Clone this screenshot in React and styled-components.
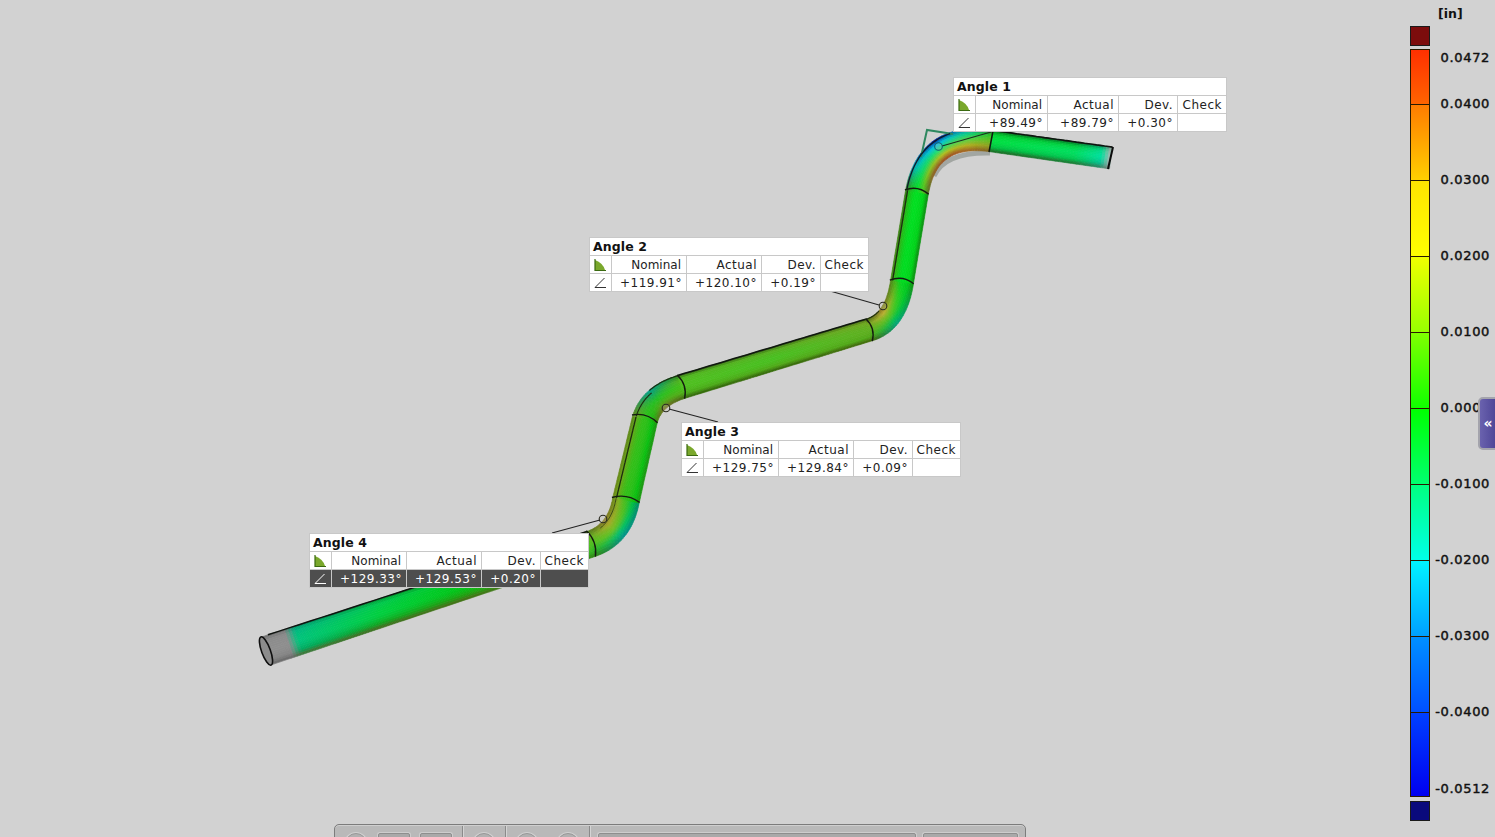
import React from 'react';
import styled, { createGlobalStyle } from 'styled-components';

const GlobalStyle = createGlobalStyle`
    html, body {
        margin: 0;
        padding: 0;
        height: 100%;
        overflow: hidden;
        background: #d2d2d2;
    }
`;

const Root = styled.div`
    display: flex;
    width: 1495px;
    height: 837px;
    position: relative;
    overflow: hidden;
    background: #d2d2d2;
    font-family: "DejaVu Sans", sans-serif;
`;

const Scene = styled.div`
    position: relative;
    width: 1400px;
    height: 837px;
`;

const SceneDrawing = styled.svg`
    display: block;
    width: 1400px;
    height: 837px;
`;

const Label = styled.div`
    position: absolute;
    left: ${p => p.$x}px;
    top: ${p => p.$y}px;
    display: grid;
    grid-template-columns: ${p => p.$cols};
    grid-auto-rows: 17px;
    gap: 1px;
    padding: 1px;
    background: #c8c8c8;
    color: #222;
    font-size: 12px;
    line-height: 17px;
`;

const LabelTitle = styled.div`
    grid-column: 1 / -1;
    background: #fff;
    color: #111;
    font-weight: bold;
    font-size: 12.5px;
    letter-spacing: 0.1px;
    padding-left: 3px;
`;

const Cell = styled.div`
    background: ${p => (p.$selected ? '#4e4e4e' : '#fff')};
    color: ${p => (p.$selected ? '#fff' : '#222')};
    text-align: right;
    padding-right: ${p => (p.$tight ? 5 : 4)}px;
    letter-spacing: ${p => (p.$tight ? 0 : 0.5)}px;
    line-height: 19px;
    white-space: nowrap;
    display: ${p => (p.$icon ? 'flex' : 'block')};
    align-items: center;
    justify-content: center;
    ${p => p.$icon && 'padding-right: 1px;'}
`;

const Toolbar = styled.div`
    position: absolute;
    left: 334px;
    top: 824px;
    width: 692px;
    height: 40px;
    box-sizing: border-box;
    display: flex;
    align-items: flex-start;
    padding-top: 8px;
    padding-left: 10px;
    border: 1px solid #7c7c7c;
    border-radius: 5px 5px 0 0;
    background: #b9b9b9;
    box-shadow: inset 0 1px 0 #cfcfcf;
`;

const ToolRound = styled.div`
    box-sizing: border-box;
    width: 22px;
    height: 22px;
    flex: none;
    border-radius: 50%;
    margin-right: ${p => p.$gap || 0}px;
    border: 1px solid #979797;
    box-shadow: 0 0 0 1px #d0d0d0;
    background: #b1b1b1;
`;

const ToolSquare = styled.div`
    box-sizing: border-box;
    width: 32px;
    height: 24px;
    flex: none;
    margin-right: ${p => p.$gap || 0}px;
    border: 1px solid #8e8e8e;
    border-radius: 2px;
    box-shadow: 0 0 0 1px #cdcdcd;
    background: #a9a9a9;
`;

const ToolDivider = styled.div`
    width: 1px;
    height: 30px;
    flex: none;
    margin: -7px ${p => p.$after || 10}px 0 0;
    background: #8a8a8a;
    box-shadow: 1px 0 0 #d4d4d4;
`;

const ToolField = styled.div`
    box-sizing: border-box;
    width: ${p => p.$w}px;
    height: 24px;
    flex: none;
    margin-right: ${p => p.$gap || 0}px;
    border: 1px solid #8e8e8e;
    border-radius: 2px;
    box-shadow: 0 0 0 1px #cdcdcd;
    background: #a9a9a9;
`;

const Legend = styled.aside`
    width: 95px;
    height: 837px;
    flex: none;
    box-sizing: border-box;
    padding-top: 6px;
    padding-left: 10px;
    color: #111;
    display: flex;
    flex-direction: column;
`;

const Unit = styled.div`
    height: 20px;
    padding-left: 28px;
    font-size: 12.5px;
    font-weight: bold;
    line-height: 15px;
`;

const Swatch = styled.div`
    width: 18px;
    height: 18px;
    border: 1px solid #1a1a1a;
    background: ${p => p.$color};
    margin-top: ${p => p.$top || 0}px;
    flex: none;
`;

const Scale = styled.div`
    margin-top: 3px;
    position: relative;
    height: 748px;
    flex: none;
`;

const Band = styled.div`
    box-sizing: border-box;
    width: 20px;
    height: ${p => p.$h}px;
    background: linear-gradient(${p => p.$from}, ${p => p.$to});
    border-style: solid;
    border-width: ${p => (p.$first ? '1px' : '0')} 1px 1px 1px;
    border-color: #2a1a00;
`;

const Tick = styled.div`
    position: absolute;
    right: 5px;
    top: ${p => p.$y}px;
    font-size: 13px;
    letter-spacing: 0.65px;
    line-height: 16px;
    text-align: right;
    white-space: nowrap;
    -webkit-text-stroke: 0.45px #111;
`;

const Tab = styled.div`
    position: absolute;
    right: -5px;
    top: 397px;
    width: 16px;
    height: 49px;
    padding-right: 2px;
    border: 2px solid #a4a4ac;
    border-radius: 5px 0 0 5px;
    background: linear-gradient(90deg, #6a62ae, #4a4294);
    color: #fff;
    font-size: 14px;
    font-weight: bold;
    line-height: 49px;
    text-align: center;
`;

const bands = [
    [56, '#ff3000', '#ff6400'],
    [76, '#ff7c00', '#ffd000'],
    [76, '#ffe400', '#ffff00'],
    [76, '#f0ff00', '#98ff00'],
    [76, '#80ff00', '#10ff00'],
    [76, '#00ff00', '#00ff70'],
    [76, '#00ff80', '#00ffe8'],
    [76, '#00f4ff', '#00a0ff'],
    [76, '#0090ff', '#0050ff'],
    [84, '#0040ff', '#0000f0'],
];

const ticks = [
    [1, '0.0472'], [47, '0.0400'], [123, '0.0300'], [199, '0.0200'], [275, '0.0100'],
    [351, '0.0000'], [427, '-0.0100'], [503, '-0.0200'], [579, '-0.0300'], [655, '-0.0400'], [732, '-0.0512'],
];

// centre line of the tube, in page pixels: lines and quadratic bends
const P = {
    p0: [266, 651], a: [591, 544], ac: [620, 534], b: [626, 500], c: [645, 419], cc: [652, 396],
    d: [681, 387], e: [869, 330], ec: [896, 322], f: [902, 282], g: [917, 192], gc: [928, 132],
    h: [991, 141], i: [1111, 158],
};

const gray = ['#6e6e6e', '#8a8a8a', '#8e8e8e', '#848484', '#666666'];

// colours across the tube (upper-left edge to lower-right edge), by place along each piece
// bends keep their colours spread wide, straights only have a thin edge (spread)
const pieces = [
    { from: P.p0, to: P.a, r0: 14.8, r1: 13.2, n: 110, spread: 1.7, stations: [
        [0, gray], [0.07, gray],
        [0.1, ['#00906a', '#00b880', '#00c47c', '#00a860', '#4c6c30']],
        [0.35, ['#009030', '#00c850', '#00d040', '#10a820', '#4c6420']],
        [0.6, ['#108a20', '#00cc20', '#00c818', '#20a010', '#4c6818']],
        [1, ['#507818', '#60b020', '#50c020', '#30b020', '#308010']],
    ] },
    { from: P.a, ctrl: P.ac, to: P.b, r0: 13.2, r1: 13.5, n: 30, spread: 1.1, stations: [
        [0, ['#507818', '#60b020', '#50c020', '#30b020', '#308010']],
        [0.5, ['#807020', '#a8a828', '#70c020', '#00c070', '#008c8c']],
        [1, ['#6a8418', '#80b020', '#40c020', '#00c040', '#008868']],
    ] },
    { from: P.b, to: P.c, r0: 13.5, r1: 12.8, n: 30, spread: 1.7, stations: [
        [0, ['#6a8418', '#70a818', '#30c018', '#08c010', '#209010']],
        [1, ['#5c8018', '#60a818', '#30c018', '#08c010', '#209010']],
    ] },
    { from: P.c, ctrl: P.cc, to: P.d, r0: 12.8, r1: 12, n: 24, spread: 1.1, stations: [
        [0, ['#5c8018', '#60a818', '#30c018', '#10c010', '#408010']],
        [0.5, ['#00a090', '#10a860', '#20c020', '#50a818', '#806828']],
        [1, ['#207818', '#50b020', '#40c018', '#50b018', '#406810']],
    ] },
    { from: P.d, to: P.e, r0: 12, r1: 11.3, n: 60, spread: 1.7, stations: [
        [0, ['#305810', '#50b820', '#50c020', '#48a818', '#305c08']],
        [0.5, ['#305810', '#58b020', '#48c020', '#50a818', '#305c08']],
        [1, ['#405c10', '#70a820', '#60b020', '#50a818', '#406008']],
    ] },
    { from: P.e, ctrl: P.ec, to: P.f, r0: 11.3, r1: 11.6, n: 24, spread: 1.1, stations: [
        [0, ['#405c10', '#70a820', '#60b020', '#50a818', '#406008']],
        [0.45, ['#807020', '#c0b030', '#60c020', '#00c050', '#00a080']],
        [1, ['#508018', '#40b818', '#00d820', '#00c818', '#109010']],
    ] },
    { from: P.f, to: P.g, r0: 11.6, r1: 11.6, n: 30, spread: 1.7, stations: [
        [0, ['#508018', '#30b818', '#00dc20', '#00d018', '#108810']],
        [1, ['#406c18', '#20b818', '#00e020', '#00d018', '#108810']],
    ] },
    { from: P.g, ctrl: P.gc, to: P.h, r0: 11.6, r1: 10.8, n: 40, spread: 1, stations: [
        [0, ['#406c18', '#20b818', '#00e020', '#40c820', '#507020']],
        [0.2, ['#00a0c0', '#00c8a0', '#10d860', '#80c020', '#905828']],
        [0.5, ['#000090', '#00c0e8', '#20e070', '#b0c020', '#a04020']],
        [0.8, ['#00a0c0', '#10d080', '#60d040', '#b0b020', '#a06020']],
        [1, ['#106020', '#30c020', '#60c020', '#90a020', '#806020']],
    ] },
    { from: P.h, to: P.i, r0: 10.8, r1: 11, n: 40, spread: 1.3, stations: [
        [0, ['#005c10', '#00d030', '#00e040', '#00c040', '#206020']],
        [0.7, ['#006020', '#00d040', '#00e060', '#00c850', '#207030']],
        [0.92, ['#008050', '#00d888', '#00e0a0', '#00c090', '#308060']],
        [1, ['#8a8a8a', '#b0b0b0', '#b4b4b4', '#a8a8a8', '#808080']],
    ] },
];

const STRIPS = 14;

const hexToRgb = h => [1, 3, 5].map(i => parseInt(h.slice(i, i + 2), 16));

const mix = (a, b, t) => a.map((v, i) => v + (b[i] - v) * t);

const across = (colours, v, spread) => {
    const w = Math.sign(v) * Math.pow(Math.abs(v), spread);
    const x = ((w + 1) / 2) * (colours.length - 1);
    const i = Math.min(Math.floor(x), colours.length - 2);
    return mix(hexToRgb(colours[i]), hexToRgb(colours[i + 1]), x - i);
};

const colourAt = ({ stations, spread }, u, v) => {
    let k = 0;
    while (k < stations.length - 2 && u > stations[k + 1][0]) k++;
    const [u0, c0] = stations[k];
    const [u1, c1] = stations[k + 1];
    const t = Math.max(0, Math.min(1, (u - u0) / (u1 - u0)));
    const c = mix(across(c0, v, spread), across(c1, v, spread), t);
    return `rgb(${c.map(Math.round).join(',')})`;
};

const pointOn = (piece, u) => {
    const { from, ctrl, to } = piece;
    if (!ctrl) {
        return {
            pt: [from[0] + (to[0] - from[0]) * u, from[1] + (to[1] - from[1]) * u],
            dir: [to[0] - from[0], to[1] - from[1]],
        };
    }
    const w = 1 - u;
    return {
        pt: [0, 1].map(i => w * w * from[i] + 2 * w * u * ctrl[i] + u * u * to[i]),
        dir: [0, 1].map(i => 2 * w * (ctrl[i] - from[i]) + 2 * u * (to[i] - ctrl[i])),
    };
};

const offsetAt = (piece, u, v) => {
    const { pt, dir } = pointOn(piece, u);
    const len = Math.hypot(dir[0], dir[1]);
    const r = piece.r0 + (piece.r1 - piece.r0) * u;
    // left of travel is the upper-left side of the tube
    const nx = dir[1] / len;
    const ny = -dir[0] / len;
    return [pt[0] - nx * v * r, pt[1] - ny * v * r];
};

const fmt = p => `${p[0].toFixed(1)},${p[1].toFixed(1)}`;

const buildQuads = () => {
    const quads = [];
    pieces.forEach((piece, pi) => {
        for (let s = 0; s < piece.n; s++) {
            const u0 = s / piece.n;
            const u1 = (s + 1) / piece.n;
            for (let j = 0; j < STRIPS; j++) {
                const v0 = -1 + (2 * j) / STRIPS;
                const v1 = -1 + (2 * (j + 1)) / STRIPS;
                const pts = [
                    offsetAt(piece, u0, v0), offsetAt(piece, u1, v0),
                    offsetAt(piece, u1, v1), offsetAt(piece, u0, v1),
                ].map(fmt).join(' ');
                const fill = colourAt(piece, (u0 + u1) / 2, (v0 + v1) / 2);
                quads.push(<polygon key={`${pi}-${s}-${j}`} points={pts} fill={fill} stroke={fill} strokeWidth="0.6" />);
            }
        }
    });
    return quads;
};

const edgeLine = (pieceIndex, v, u0 = 0, u1 = 1) => {
    const out = [];
    for (let k = 0; k <= 30; k++) {
        out.push(fmt(offsetAt(pieces[pieceIndex], u0 + ((u1 - u0) * k) / 30, v)));
    }
    return out.join(' ');
};

const jointLine = (pieceIndex, u) => {
    const a = offsetAt(pieces[pieceIndex], u, -1.06);
    const b = offsetAt(pieces[pieceIndex], u, 1.02);
    const { dir } = pointOn(pieces[pieceIndex], u);
    const len = Math.hypot(dir[0], dir[1]);
    const mid = [(a[0] + b[0]) / 2 + (dir[0] / len) * 7, (a[1] + b[1]) / 2 + (dir[1] / len) * 7];
    return `M${fmt(a)} Q${fmt(mid)} ${fmt(b)}`;
};

const TubeDrawing = () => (
    <SceneDrawing viewBox="0 0 1400 837">
        <path d="M934 176 Q945 152 990 153" fill="none" stroke="#a2a6a2" strokeWidth="5" />
        {buildQuads()}
        <polyline points="921,157 927,130 953,134" fill="none" stroke="#2f8860" strokeWidth="2" />
        {/* top edges and the inner seam */}
        <polyline points={edgeLine(0, -1, 0.02, 1)} fill="none" stroke="#101410" strokeWidth="1.5" />
        <polyline points={edgeLine(2, -0.72)} fill="none" stroke="#1c2c10" strokeWidth="1.3" />
        <polyline points={edgeLine(3, -0.72, 0, 0.5)} fill="none" stroke="#1c2c10" strokeWidth="1.1" />
        <polyline points={edgeLine(3, -0.98, 0.5, 1)} fill="none" stroke="#1c2c10" strokeWidth="1.2" />
        <polyline points={edgeLine(4, -1)} fill="none" stroke="#101810" strokeWidth="1.6" />
        <polyline points={edgeLine(5, -0.98, 0, 0.4)} fill="none" stroke="#203010" strokeWidth="1.1" />
        <polyline points={edgeLine(6, -0.82)} fill="none" stroke="#1c2c10" strokeWidth="1.3" />
        <polyline points={edgeLine(7, -0.9, 0, 0.65)} fill="none" stroke="#101828" strokeWidth="1.3" />
        <polyline points={edgeLine(8, -1)} fill="none" stroke="#101410" strokeWidth="1.6" />
        <polyline points={edgeLine(1, -0.74, 0.3, 1)} fill="none" stroke="#3c4c18" strokeWidth="1" />
        {/* bend joints */}
        {[[1, 0], [1, 1], [3, 0], [3, 1], [5, 0], [5, 1], [7, 0]].map(([pi, u]) => (
            <path key={`${pi}-${u}`} d={jointLine(pi, u)} fill="none" stroke="#141c10" strokeWidth="1.4" />
        ))}
        <line x1="993" y1="131" x2="989" y2="152" stroke="#101810" strokeWidth="1.5" />
        {/* pipe ends */}
        <ellipse cx="266" cy="651" rx="4.4" ry="15" transform="rotate(-20 266 651)" fill="#8c8c8c" stroke="#101010" strokeWidth="1.6" />
        <line x1="1113" y1="147" x2="1108" y2="169" stroke="#0c0c0c" strokeWidth="2" />
        {/* leaders and measuring points */}
        <line x1="830" y1="291" x2="879" y2="305" stroke="#222" strokeWidth="1.1" />
        <line x1="669" y1="409" x2="718" y2="422" stroke="#222" strokeWidth="1.1" />
        <line x1="552" y1="533" x2="600" y2="520" stroke="#222" strokeWidth="1.1" />
        <line x1="942" y1="146" x2="991" y2="132" stroke="#1c2c20" strokeWidth="1.1" />
        <g fill="rgba(190,190,170,0.25)" stroke="#2a2a20" strokeWidth="1.1">
            <circle cx="883" cy="306" r="3.8" />
            <circle cx="666" cy="408" r="3.8" />
            <circle cx="603" cy="519" r="3.8" />
            <circle cx="938.5" cy="146.5" r="3.8" stroke="#106070" />
        </g>
    </SceneDrawing>
);

const MeasureIcon = () => (
    <svg width="14" height="14" viewBox="0 0 14 14">
        <path d="M2 12 V2 Q10 5 12 12 Z" fill="#7aa82c" />
        <path d="M2 1 V12.5 H13" fill="none" stroke="#3a6a10" strokeWidth="1.2" />
    </svg>
);

const AngleIcon = ({ light }) => (
    <svg width="14" height="14" viewBox="0 0 14 14">
        <path d="M11.5 2 L2 11.5 H13" fill="none" stroke={light ? '#fff' : '#333'} strokeWidth="1" />
    </svg>
);

const labels = [
    { name: 'Angle 1', x: 953, y: 77, cols: '21px 71px 70px 58px 48px', vals: ['+89.49°', '+89.79°', '+0.30°'] },
    { name: 'Angle 2', x: 589, y: 237, cols: '21px 74px 74px 58px 47px', vals: ['+119.91°', '+120.10°', '+0.19°'] },
    { name: 'Angle 3', x: 681, y: 422, cols: '21px 74px 74px 58px 47px', vals: ['+129.75°', '+129.84°', '+0.09°'] },
    { name: 'Angle 4', x: 309, y: 533, cols: '21px 74px 74px 58px 47px', vals: ['+129.33°', '+129.53°', '+0.20°'], selected: true },
];

const AngleLabel = ({ name, x, y, cols, vals, selected }) => (
    <Label $x={x} $y={y} $cols={cols}>
        <LabelTitle>{name}</LabelTitle>
        <Cell $icon><MeasureIcon /></Cell>
        <Cell $tight>Nominal</Cell>
        <Cell>Actual</Cell>
        <Cell>Dev.</Cell>
        <Cell>Check</Cell>
        <Cell $icon $selected={selected}><AngleIcon light={selected} /></Cell>
        {vals.map(v => <Cell key={v} $selected={selected}>{v}</Cell>)}
        <Cell $selected={selected} />
    </Label>
);

export default function App() {
    return (
        <Root>
            <GlobalStyle />
            <Scene>
                <TubeDrawing />
                {labels.map(l => <AngleLabel key={l.name} {...l} />)}
                <Toolbar>
                    <ToolRound $gap={11} />
                    <ToolSquare $gap={10} />
                    <ToolSquare $gap={10} />
                    <ToolDivider />
                    <ToolRound $gap={10} />
                    <ToolDivider />
                    <ToolRound $gap={19} />
                    <ToolRound $gap={10} />
                    <ToolDivider $after={8} />
                    <ToolField $w={318} $gap={7} />
                    <ToolField $w={95} />
                </Toolbar>
            </Scene>
            <Legend>
                <Unit>[in]</Unit>
                <Swatch $color="#7c0c0c" />
                <Scale>
                    {bands.map(([h, from, to], i) => (
                        <Band key={from} $h={h} $from={from} $to={to} $first={i === 0} />
                    ))}
                    {ticks.map(([y, text]) => <Tick key={text} $y={y}>{text}</Tick>)}
                </Scale>
                <Swatch $color="#0a0a7c" $top={4} />
            </Legend>
            <Tab>«</Tab>
        </Root>
    );
}
